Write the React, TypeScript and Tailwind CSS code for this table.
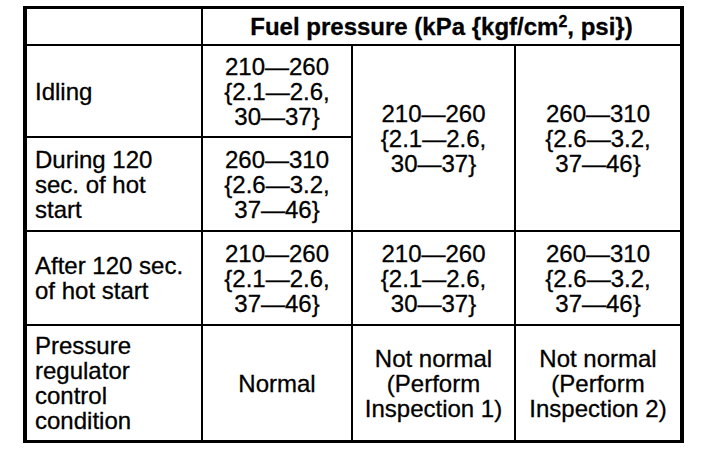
const font = { fontFamily: '"Liberation Sans", Arial, sans-serif' };

function Label({ lines }: { lines: string[] }) {
  return (
    <div className="flex flex-col justify-center bg-white pl-2 text-left">
      {lines.map((l) => (
        <span key={l}>{l}</span>
      ))}
    </div>
  );
}

function Value({ lines, className = '' }: { lines: string[]; className?: string }) {
  return (
    <div className={`flex flex-col items-center justify-center bg-white text-center ${className}`}>
      {lines.map((l, i) => (
        <span key={i}>{l}</span>
      ))}
    </div>
  );
}

const low = ['210—260', '{2.1—2.6,', '30—37}'];
const high = ['260—310', '{2.6—3.2,', '37—46}'];

export default function App() {
  return (
    <div className="h-[464px] w-[704px] bg-white pl-[23px] pt-[6px] text-black" style={font}>
      <div className="grid w-[661px] grid-cols-[174px_148px_161px_164px] grid-rows-[35px_90px_92px_92px_114px] gap-[2px] border-x-4 border-y-[3px] border-black bg-black text-[24px] leading-[25px] [-webkit-text-stroke:0.3px_black]">
        {/* header */}
        <div className="bg-white" />
        <div className="col-span-3 flex items-center justify-center bg-white font-bold">
          <span>
            Fuel pressure (kPa {'{'}kgf/cm<sup className="text-[16px]">2</sup>, psi{'}'})
          </span>
        </div>

        {/* idling */}
        <Label lines={['Idling']} />
        <Value lines={low} />
        <Value lines={low} className="row-span-2" />
        <Value lines={high} className="row-span-2" />

        {/* during hot start */}
        <Label lines={['During 120', 'sec. of hot', 'start']} />
        <Value lines={high} />

        {/* after hot start */}
        <Label lines={['After 120 sec.', 'of hot start']} />
        <Value lines={['210—260', '{2.1—2.6,', '37—46}']} />
        <Value lines={low} />
        <Value lines={high} />

        {/* regulator condition */}
        <Label lines={['Pressure', 'regulator', 'control', 'condition']} />
        <Value lines={['Normal']} />
        <Value lines={['Not normal', '(Perform', 'Inspection 1)']} />
        <Value lines={['Not normal', '(Perform', 'Inspection 2)']} />
      </div>
    </div>
  );
}
